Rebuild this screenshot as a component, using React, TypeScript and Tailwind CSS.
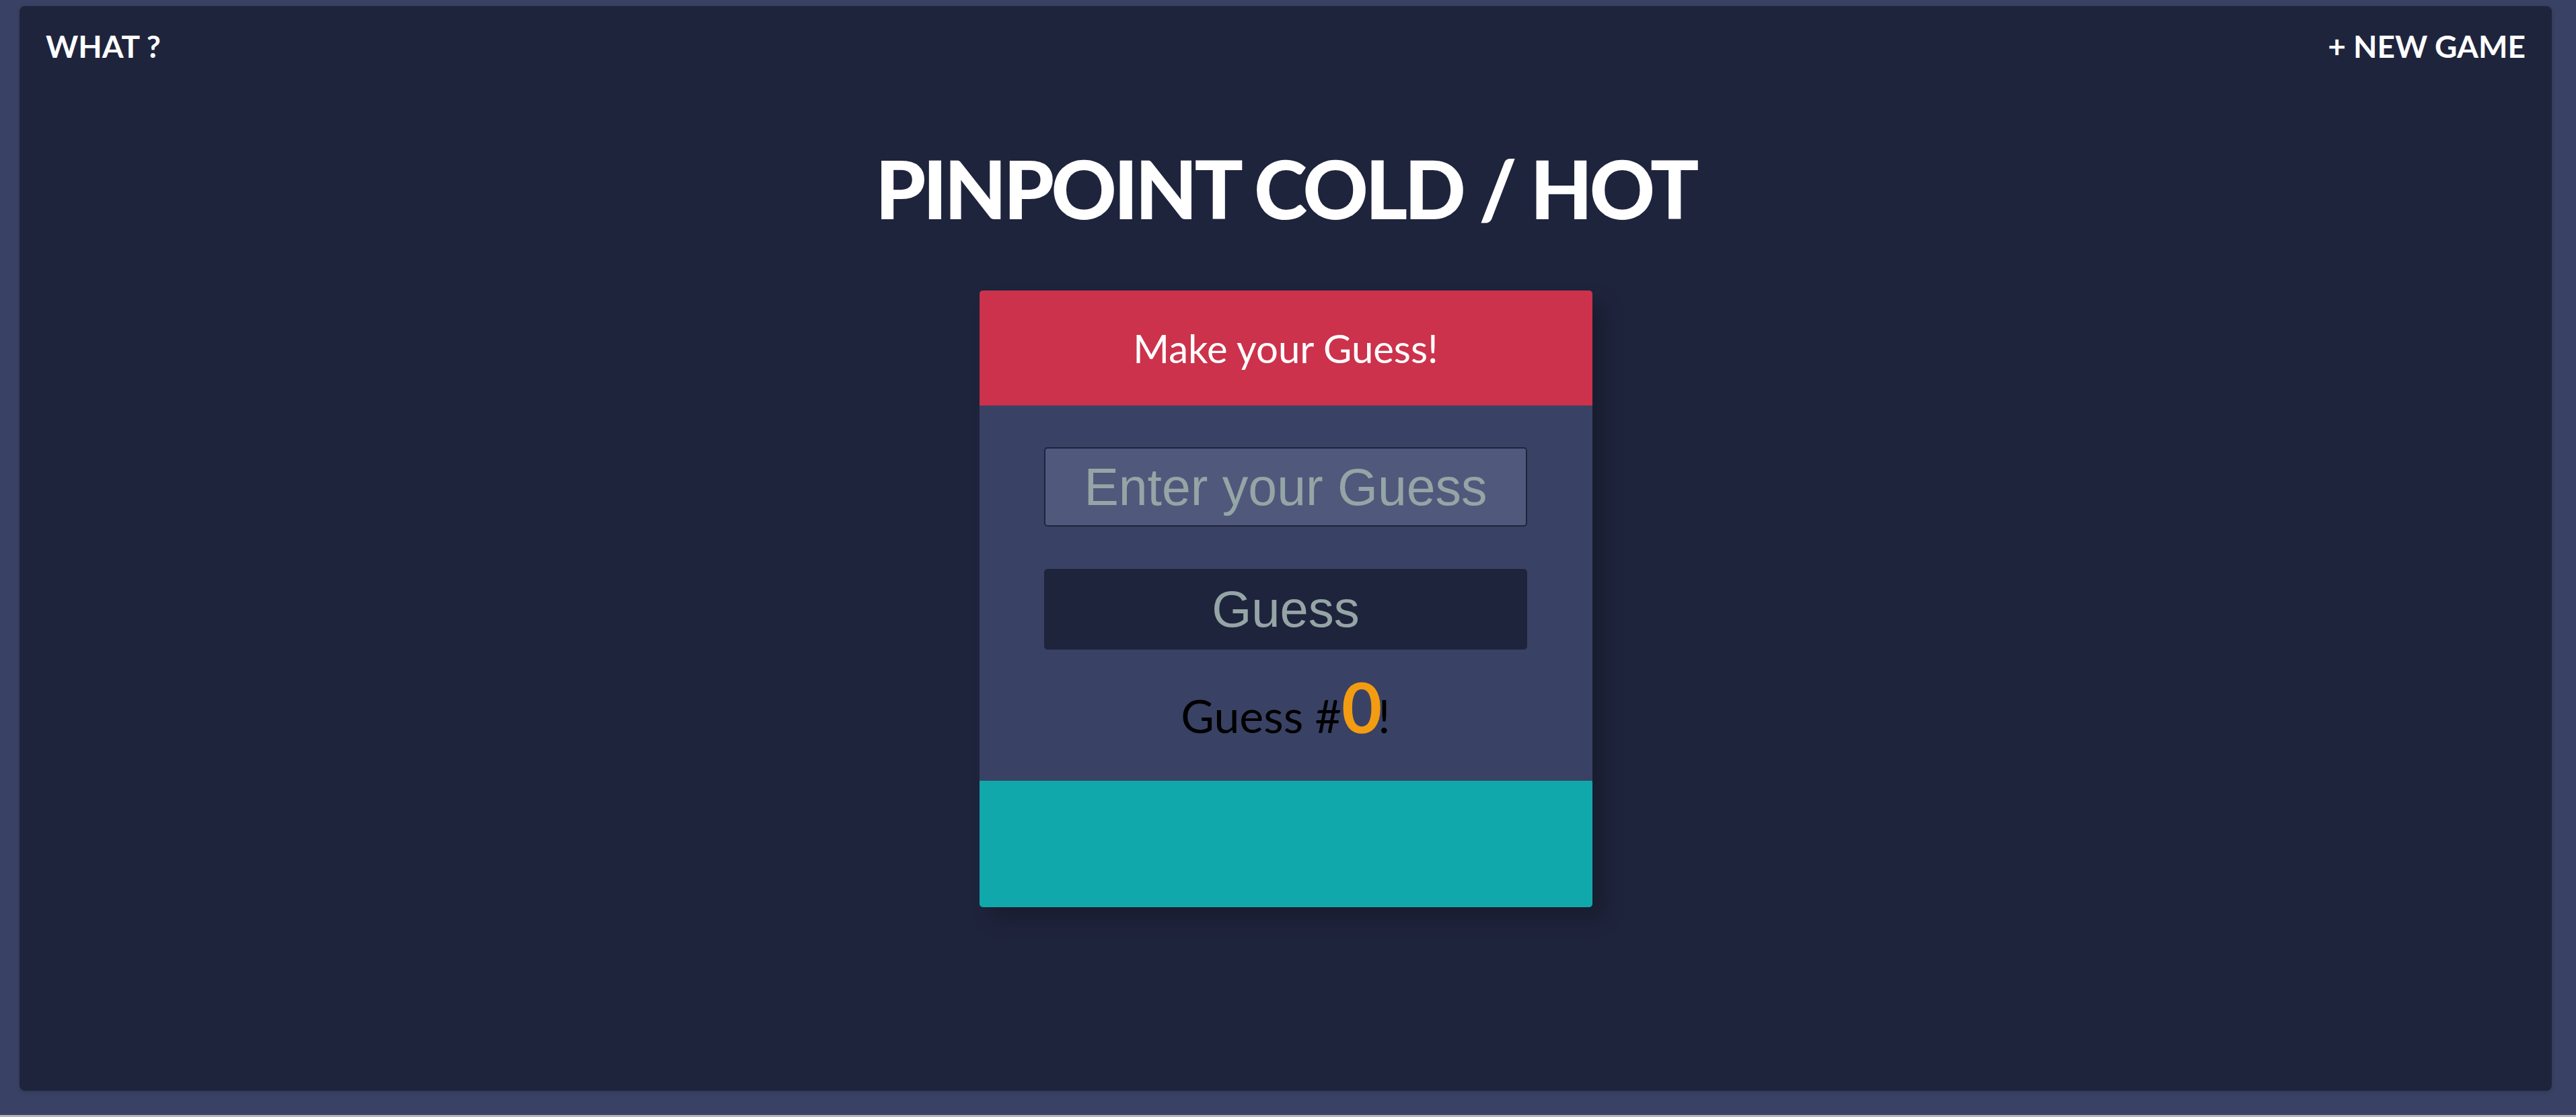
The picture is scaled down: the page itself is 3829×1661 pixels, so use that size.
export default function App() {
  return (
    <div className="flex h-[1661px] w-full flex-col bg-[#394264] font-['Lato',sans-serif]">
      <div className="flex flex-1 pl-[29px] pr-[36px] pt-[9px] pb-[36px]">
        <main className="flex flex-1 flex-col rounded-[8px] bg-[#1f243d] shadow-[0_2px_6px_rgba(0,0,0,0.15)]">
          <nav className="flex items-start justify-between px-[39px] pt-[37px]">
            <a className="text-[46px] font-bold leading-none text-white">WHAT ?</a>
            <a className="text-[46px] font-bold leading-none text-white">+ NEW GAME</a>
          </nav>

          <h1 className="mt-[128px] text-center text-[120px] font-black leading-none tracking-[-4.5px] text-white">
            PINPOINT COLD / HOT
          </h1>

          <section className="mx-auto mt-[92px] w-[911px] overflow-hidden rounded-[5px] bg-[#394264] shadow-[18px_18px_30px_rgba(0,0,0,0.22)]">
            <header className="flex h-[171px] items-center justify-center bg-[#cc324b]">
              <h2 className="text-[58px] leading-none text-white">Make your Guess!</h2>
            </header>

            <div className="flex flex-col items-center px-[96px] pt-[62px] pb-[59px]">
              <input
                type="text"
                placeholder="Enter your Guess"
                className="h-[118px] w-[718px] rounded-[5px] border-2 border-[#1f243d] bg-[#50597b] text-center font-['Liberation_Sans',Arial,sans-serif] text-[77px] text-[#95a5a6] placeholder:text-[#95a5a6] outline-none"
              />
              <button className="mt-[63px] h-[120px] w-[718px] rounded-[5px] bg-[#1f243d] font-['Liberation_Sans',Arial,sans-serif] text-[76px] leading-none text-[#95a5a6]">
                Guess
              </button>
              <p className="mt-[32px] text-center text-[68px] leading-none text-black">
                Guess #<span className="text-[104px] font-bold leading-none tracking-[-6px] text-[#f39c12]">0</span>!
              </p>
            </div>

            <footer className="h-[188px] bg-[#11a8ab]" />
          </section>
        </main>
      </div>
      <div className="h-[3px] bg-[#b4b4b8]" />
    </div>
  );
}
